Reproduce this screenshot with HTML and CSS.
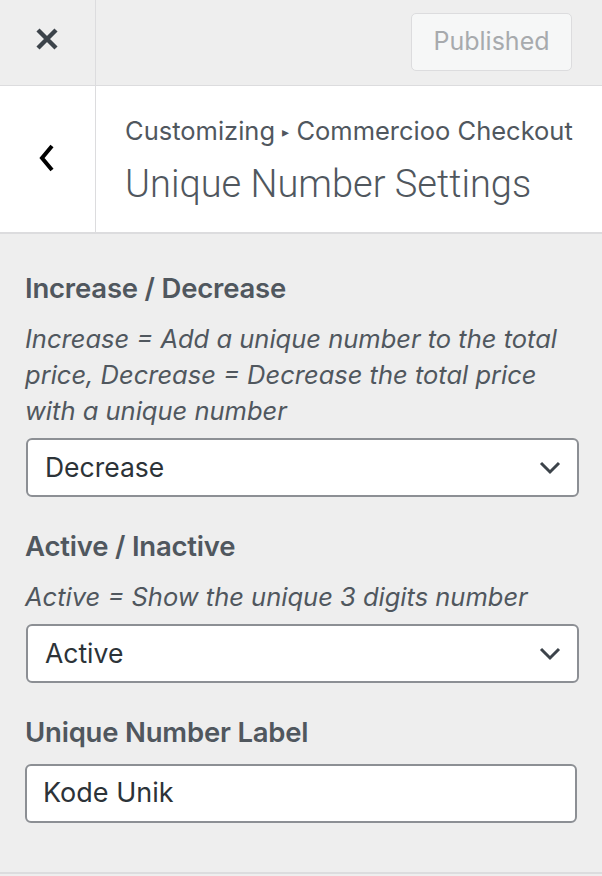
FILE: index.html
```html
<!DOCTYPE html>
<html>
<head>
<meta charset="utf-8">
<link rel="stylesheet" href="styles.css">
</head>
<body>
<div class="panel">
  <div class="topbar">
    <div class="close-cell">
      <svg width="24" height="24" viewBox="0 0 24 24"><path d="M3 3 L21 21 M21 3 L3 21" stroke="#3c434a" stroke-width="4.4" stroke-linecap="butt"/></svg>
    </div>
    <div class="topbar-right">
      <button class="published">Published</button>
    </div>
  </div>
  <div class="header">
    <div class="back-cell">
      <svg width="18" height="30" viewBox="0 0 18 30"><path d="M15 3 L5 15 L15 27" fill="none" stroke="#000" stroke-width="4"/></svg>
    </div>
    <div class="titles">
      <div class="crumb">Customizing <span class="tri">▸</span> Commercioo Checkout</div>
      <div class="title">Unique Number Settings</div>
    </div>
  </div>
  <div class="content">
    <div class="control">
      <div class="label">Increase / Decrease</div>
      <div class="desc">Increase = Add a unique number to the total price, Decrease = Decrease the total price with a unique number</div>
      <div class="select">
        <span>Decrease</span>
        <svg width="22" height="14" viewBox="0 0 22 14"><path d="M2 2 L11 11 L20 2" fill="none" stroke="#3c434a" stroke-width="3"/></svg>
      </div>
    </div>
    <div class="control">
      <div class="label">Active / Inactive</div>
      <div class="desc">Active = Show the unique 3 digits number</div>
      <div class="select">
        <span>Active</span>
        <svg width="22" height="14" viewBox="0 0 22 14"><path d="M2 2 L11 11 L20 2" fill="none" stroke="#3c434a" stroke-width="3"/></svg>
      </div>
    </div>
    <div class="control">
      <div class="label">Unique Number Label</div>
      <div class="input">Kode Unik</div>
    </div>
  </div>
</div>
</body>
</html>
```

FILE: styles.css
```css
* { box-sizing: border-box; }
html, body { margin: 0; padding: 0; }
body {
  width: 602px;
  height: 876px;
  background: #eeeeee;
  font-family: Inter, "Noto Sans", sans-serif;
  overflow: hidden;
}
.panel {
  width: 602px;
  height: 874px;
  border-bottom: 2px solid #dcdcde;
  display: flex;
  flex-direction: column;
}
.topbar {
  height: 86px;
  display: flex;
  border-bottom: 1px solid #dcdcde;
  background: #eeeeee;
  flex-shrink: 0;
}
.close-cell {
  width: 96px;
  border-right: 1px solid #dcdcde;
  display: flex;
  align-items: center;
  justify-content: center;
  padding-bottom: 8px;
  padding-right: 1px;
}
.topbar-right {
  flex: 1;
  display: flex;
  justify-content: flex-end;
  align-items: flex-start;
  padding: 13px 30px 0 0;
}
.published {
  width: 161px;
  height: 58px;
  background: #f6f7f7;
  border: 1px solid #dcdcde;
  border-radius: 5px;
  color: #a7aaad;
  font-family: Inter, "Noto Sans", sans-serif;
  font-size: 25px;
  padding: 0 0 2px 0;
}
.header {
  height: 148px;
  background: #fff;
  display: flex;
  border-bottom: 2px solid #dcdcde;
  flex-shrink: 0;
}
.back-cell {
  width: 96px;
  border-right: 1px solid #dcdcde;
  display: flex;
  align-items: center;
  justify-content: center;
  padding-right: 4px;
  padding-bottom: 2px;
}
.titles {
  padding: 29px 0 0 29px;
  display: flex;
  flex-direction: column;
}
.crumb {
  font-size: 25.5px;
  line-height: 32px;
  color: #50575e;
  white-space: nowrap;
}
.tri {
  font-size: 14px;
  position: relative;
  top: -3px;
}
.title {
  font-family: Roboto, Inter, sans-serif;
  font-size: 38px;
  font-weight: 300;
  line-height: 48px;
  color: #50575e;
  margin-top: 9px;
  white-space: nowrap;
}
.content {
  padding: 36px 0 0 25px;
  display: flex;
  flex-direction: column;
}
.control { margin-bottom: 31px; }
.label {
  font-size: 27.5px;
  font-weight: 600;
  color: #50575e;
  line-height: 36px;
  margin-bottom: 15px;
  letter-spacing: -0.2px;
  white-space: nowrap;
}
.desc {
  font-size: 25.5px;
  font-style: italic;
  color: #50575e;
  line-height: 36px;
  width: 540px;
  margin-bottom: 9px;
}
.select {
  width: 553px;
  height: 59px;
  background: #fff;
  border: 2px solid #8c8f94;
  border-radius: 6px;
  display: flex;
  align-items: center;
  justify-content: space-between;
  padding: 0 16px 0 17px;
  font-size: 26.5px;
  color: #2c3338;
  margin-left: 1px;
}
.select span { padding-bottom: 2px; }
.input {
  width: 552px;
  height: 59px;
  background: #fff;
  border: 2px solid #8c8f94;
  border-radius: 6px;
  display: flex;
  align-items: center;
  padding: 0 16px 2px 16px;
  font-size: 27px;
  color: #2c3338;
  margin-top: -1px;
}
```
